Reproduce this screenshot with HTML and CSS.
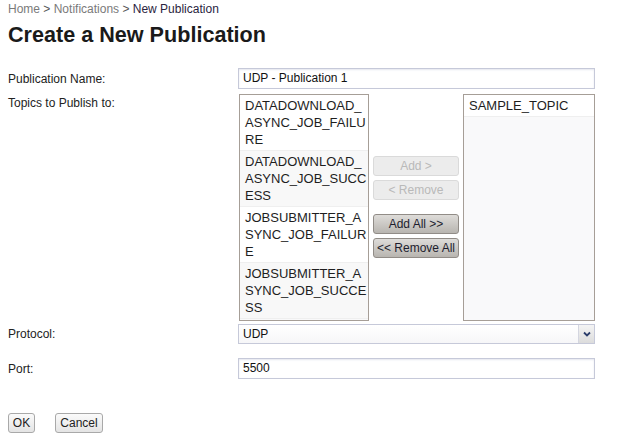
FILE: index.html
```html
<!DOCTYPE html>
<html>
<head>
<meta charset="utf-8">
<link rel="stylesheet" href="styles.css">
</head>
<body>
<div class="crumbs"><span class="link">Home</span> &gt; <span class="link">Notifications</span> &gt; <span class="current">New Publication</span></div>
<h1 class="title">Create a New Publication</h1>
<div class="form">
  <div class="row row-name">
    <div class="label">Publication Name:</div>
    <div class="field"><div class="textbox">UDP - Publication 1</div></div>
  </div>
  <div class="row row-topics">
    <div class="label label-top">Topics to Publish to:</div>
    <div class="field picker">
      <div class="list list-left">
        <div class="item">DATADOWNLOAD_ASYNC_JOB_FAILURE</div>
        <div class="item alt">DATADOWNLOAD_ASYNC_JOB_SUCCESS</div>
        <div class="item">JOBSUBMITTER_ASYNC_JOB_FAILURE</div>
        <div class="item alt">JOBSUBMITTER_ASYNC_JOB_SUCCESS</div>
      </div>
      <div class="moves">
        <div class="mbtn disabled">Add &gt;</div>
        <div class="mbtn disabled">&lt; Remove</div>
        <div class="mbtn enabled spaced">Add All &gt;&gt;</div>
        <div class="mbtn enabled">&lt;&lt; Remove All</div>
      </div>
      <div class="list list-right">
        <div class="item">SAMPLE_TOPIC</div>
      </div>
    </div>
  </div>
  <div class="row row-protocol">
    <div class="label">Protocol:</div>
    <div class="field">
      <div class="select">
        <span class="select-text">UDP</span>
        <span class="select-arrow"><svg width="8" height="6" viewBox="0 0 8 6"><path d="M1 1.5 L4 4.5 L7 1.5" fill="none" stroke="#2b3d6b" stroke-width="1.8"/></svg></span>
      </div>
    </div>
  </div>
  <div class="row row-port">
    <div class="label">Port:</div>
    <div class="field"><div class="textbox">5500</div></div>
  </div>
  <div class="actions">
    <div class="btn btn-ok">OK</div>
    <div class="btn btn-cancel">Cancel</div>
  </div>
</div>
</body>
</html>
```
FILE: styles.css
```css
html, body {
  margin: 0;
  padding: 0;
  background: #ffffff;
}
body {
  padding: 1px 8px 0 8px;
  font-family: "Liberation Sans", Arial, sans-serif;
  font-size: 12px;
  color: #222;
}
.crumbs {
  line-height: 16px;
  font-size: 12px;
  color: #555;
}
.crumbs .link { color: #7a7a7a; }
.crumbs .current { color: #2a2440; }
.title {
  margin: 5px 0 20px 0;
  font-size: 21.6px;
  line-height: 26px;
  font-weight: bold;
  color: #1a1a1a;
}
.form {
  display: flex;
  flex-direction: column;
}
.row {
  display: flex;
  align-items: center;
}
.label {
  width: 230px;
  flex: none;
  font-size: 12px;
  color: #222;
}
.label-top {
  align-self: flex-start;
  padding-top: 2px;
}
.field {
  width: 357px;
  flex: none;
}
.row-name { height: 21px; }
.row-topics { margin-top: 5px; }
.row-protocol { margin-top: 3px; height: 20px; }
.row-port { margin-top: 14px; height: 21px; }
.textbox {
  box-sizing: border-box;
  height: 21px;
  border: 1px solid #c6c9d9;
  box-shadow: inset 0 1px 2px #e4e6ee;
  padding: 0 4px;
  line-height: 19px;
  font-size: 12px;
  color: #111;
  background: #fff;
}
.picker {
  display: flex;
  align-items: flex-start;
}
.list {
  box-sizing: border-box;
  height: 227px;
  border: 1px solid #a69e97;
  overflow: hidden;
  background: #f9f9fa;
  font-size: 13px;
  line-height: 17px;
  color: #1e1e1e;
}
.list-left {
  width: 130px;
  margin-left: 1px;
}
.list-right {
  width: 132px;
}
.item {
  padding: 2px 0 2px 5px;
  border-bottom: 1px solid #efefef;
  background: #fff;
  word-break: break-all;
}
.item.alt { background: #f8f8f8; }
.list-right .item { padding-left: 5px; }
.moves {
  width: 86px;
  margin: 62px 4px 0 4px;
  display: flex;
  flex-direction: column;
  gap: 4px;
}
.mbtn {
  box-sizing: border-box;
  height: 20px;
  border-radius: 3px;
  text-align: center;
  line-height: 18px;
  font-size: 12px;
}
.mbtn.disabled {
  border: 1px solid #dadada;
  background: #ececec;
  color: #b9b9b9;
}
.mbtn.enabled {
  border: 1px solid #918c87;
  background: linear-gradient(#dedcd9, #b8b5b0);
  color: #1d1d2e;
}
.mbtn.spaced { margin-top: 10px; }
.select {
  box-sizing: border-box;
  height: 20px;
  border: 1px solid #c6c9d9;
  display: flex;
  align-items: stretch;
  background: linear-gradient(#ffffff, #f6f6f8);
}
.select-text {
  flex: 1;
  padding-left: 4px;
  line-height: 18px;
  font-size: 12px;
  color: #111;
}
.select-arrow {
  width: 15px;
  border-left: 1px solid #d4d6e0;
  background: linear-gradient(#f4f4f4, #dcdcdc);
  display: flex;
  align-items: center;
  justify-content: center;
}
.actions {
  display: flex;
  gap: 20px;
  margin-top: 34px;
}
.btn {
  box-sizing: border-box;
  height: 20px;
  border: 1px solid #a9a9a9;
  border-radius: 3px;
  background: linear-gradient(#fbfbfb, #e4e4e4);
  line-height: 18px;
  font-size: 12px;
  color: #222;
  text-align: center;
}
.btn-ok { width: 27px; }
.btn-cancel { width: 48px; }
```
